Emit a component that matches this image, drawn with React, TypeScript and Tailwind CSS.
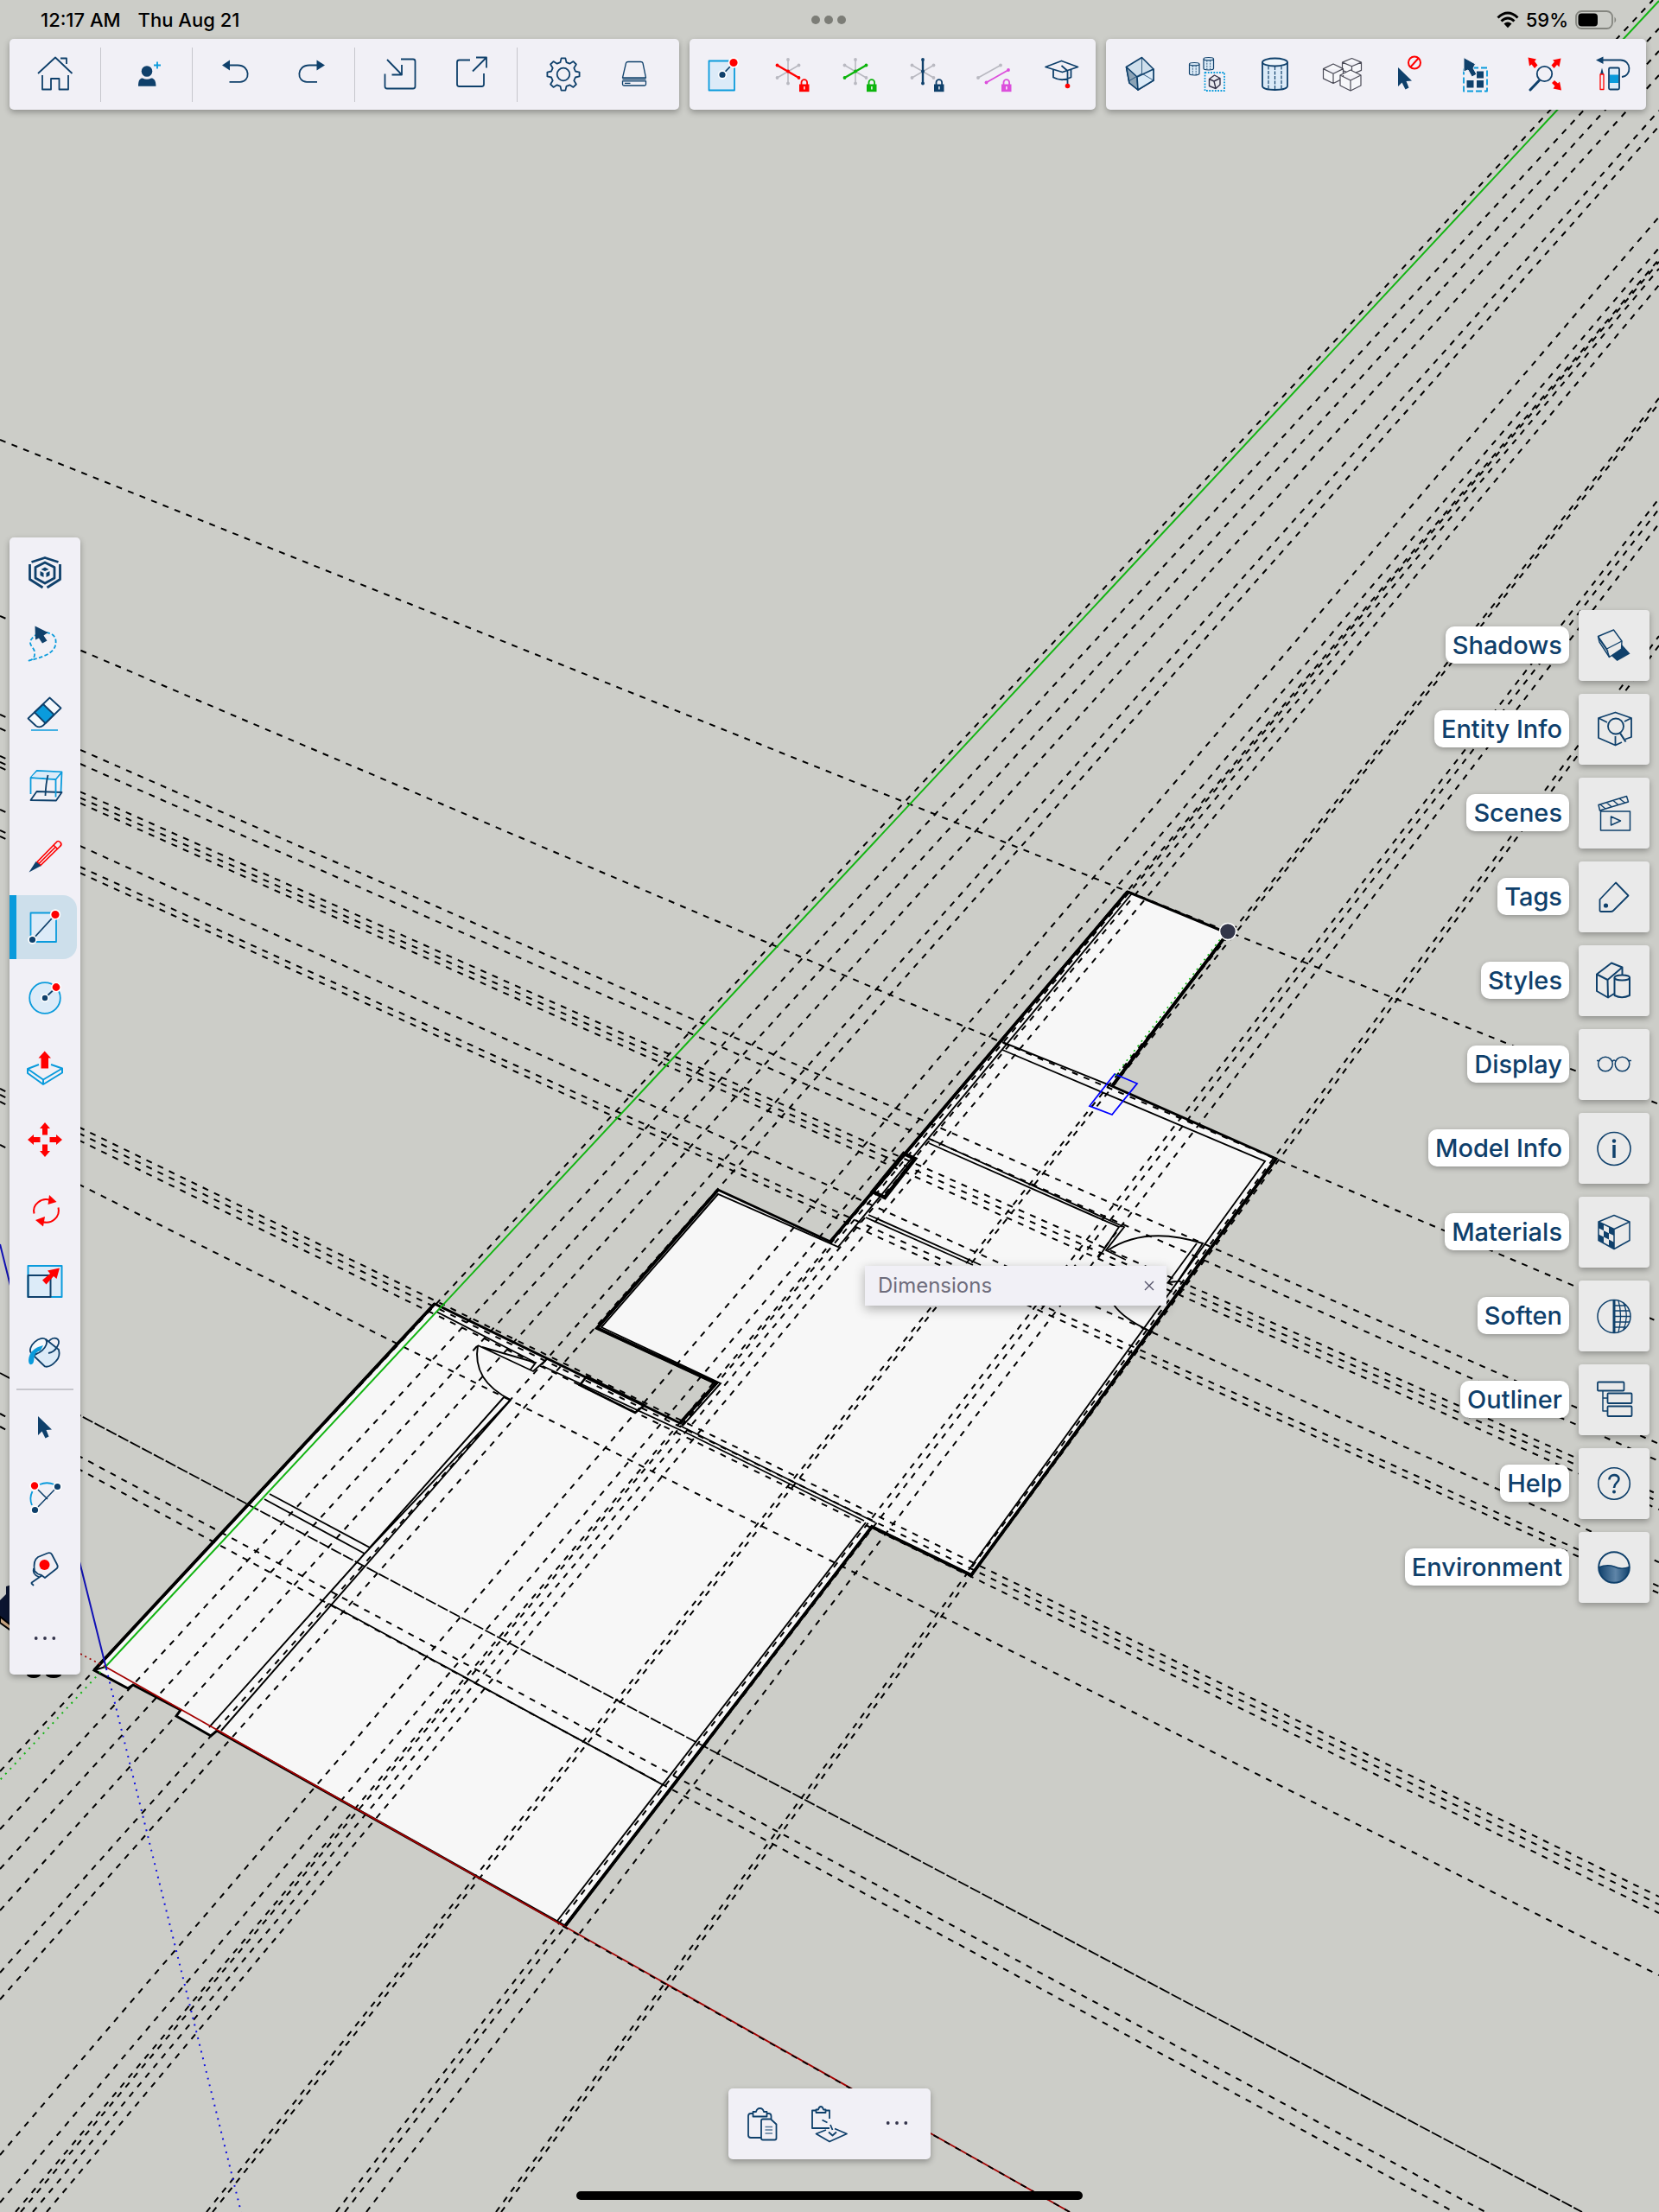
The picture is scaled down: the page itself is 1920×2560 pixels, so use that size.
import type { ReactNode } from "react";

const NAVY = "#0f406b";
const BLUE = "#0a9bdc";
const PALE = "#dcebf8";
const RED = "#ff0000";

/* ---------- Model view data ---------- */

type Seg = [number, number, number, number];

const GUIDES: Seg[] = [
  // green axis direction
  [0, 2050, 1913, 0],
  [0, 2117, 1920, 33],
  [0, 2163, 1920, 59],
  [0, 2211, 1920, 87],
  [0, 2283, 1920, 128],
  [0, 2314, 1920, 146],
  [0, 2494, 1920, 251],
  [0, 2549, 1920, 287],
  [18, 2560, 1920, 300],
  [24, 2560, 1920, 303],
  [38, 2560, 1920, 311],
  [54, 2560, 1920, 330],
  [239, 2560, 1920, 461],
  [246, 2560, 1920, 467],
  [389, 2560, 1920, 577],
  [399, 2560, 1920, 589],
  [424, 2560, 1920, 606],
  [574, 2560, 1920, 736],
  [580, 2560, 1920, 747],
  // red axis direction
  [0, 509, 1920, 1278],
  [0, 713, 1920, 1530],
  [0, 827, 1920, 1671],
  [0, 843, 1920, 1691],
  [0, 875, 1920, 1730],
  [0, 882, 1920, 1738],
  [0, 888, 1920, 1747],
  [0, 937, 1920, 1808],
  [0, 961, 1920, 1836],
  [0, 968, 1920, 1844],
  [0, 1260, 1920, 2195],
  [0, 1267, 1920, 2204],
  [0, 1275, 1920, 2214],
  [0, 1325, 1920, 2286],
  [0, 1636, 1719, 2560],
  [0, 1651, 1683, 2560],
];

const FLOOR =
  "M503 1509 L109 1933 L148 1954 L154 1950 L209 1979 L204 1986 L244 2009 L251 2003 L654 2229 L1009 1767 L1124 1823 L1477 1341 L1287 1257 L1421 1080 L1305 1032 L961 1437 L831 1377 L691 1537 L829 1601 L787 1647 Z";

const WALLS = [
  "M505 1518 L618 1576 M628 1581 L800 1661 L1000 1760",
  "M787 1650 L1013 1762",
  "M553 1557 L617 1587 L633 1573 M553 1557 Q546 1598 591 1620 M558 1559 L620 1577 L614 1585",
  "M584 1616 L428 1791 L312 1729 M591 1620 L422 1798",
  "M422 1798 L306 1735 M422 1798 L242 1999 M591 1620 L256 2003",
  "M381 1856 L766 2065",
  "M645 2223 L1002 1762",
  "M1310 1034 L970 1443 L831 1382 L696 1536 L834 1601 L790 1650",
  "M1160 1206 L1287 1257 M1160 1215 L1464 1344 L1121 1817",
  "M1078 1319 L1301 1420 L1280 1447 L1303 1458 M1075 1323 L1295 1420 L1271 1456",
  "M1005 1406 L1135 1464 M1002 1409 L1126 1464",
  "M1282 1447 Q1326 1418 1392 1439 L1363 1483 L1352 1484 L1385 1439 M1289 1510 Q1300 1526 1330 1540",
  "M109 1933 L122 1929",
];

function ModelView() {
  return (
    <svg viewBox="0 0 1920 2560" preserveAspectRatio="xMidYMid slice" className="absolute inset-0 h-full w-full" aria-hidden="true">
      <path d={FLOOR} fill="#f7f7f7" />
      <g stroke="#000" strokeWidth="2" strokeDasharray="7 7.5">
        {GUIDES.map(([x1, y1, x2, y2], i) => (
          <line key={i} x1={x1} y1={y1} x2={x2} y2={y2} />
        ))}
      </g>
      <path d="M0 1589 L1831 2560" stroke="#000" strokeWidth="1.8" strokeDasharray="13 2.5" />
      <g fill="none" stroke="#000" strokeWidth="1.9">
        {WALLS.map((d) => (
          <path key={d} d={d} />
        ))}
        <path d={FLOOR} strokeWidth="3" />
        <path d="M503 1509 L109 1933 M654 2229 L1009 1767 L1124 1823 L1477 1341 M1287 1257 L1421 1080 M1305 1032 L961 1437 M831 1377 L691 1537 L829 1601 L787 1647" strokeWidth="3.8" />
        <path d="M1046 1335 L1059 1341 L1024 1386 L1010 1379 Z" strokeWidth="4.5" />
        <path d="M679 1593 L746 1626 L735 1635 L671 1603 Z" strokeWidth="2.6" />
      </g>

      {/* Axes */}
      <path d="M122 1929 L1920 1" stroke="#13b413" strokeWidth="2" />
      <path d="M122 1929 L0 2060" stroke="#13b413" strokeWidth="2" strokeDasharray="2 6" />
      <path d="M122 1929 L1238 2560" stroke="#a30000" strokeWidth="1.8" />
      <path d="M651 2229 L1238 2560" stroke="#000" strokeWidth="1.8" strokeDasharray="7 7.5" />
      <path d="M93 1914 L122 1929" stroke="#a30000" strokeWidth="1.8" strokeDasharray="2 4" />
      <path d="M0 1440 L123 1931" stroke="#1111b5" strokeWidth="2" />
      <path d="M123 1931 L279 2560" stroke="#1111e0" strokeWidth="2" strokeDasharray="2 6" />

      {/* Rectangle being drawn */}
      <path d="M1290 1243 L1316 1254 L1287 1290 L1261 1280 Z" fill="none" stroke="#0000ff" strokeWidth="1.8" />
      <path d="M1416 1082 L1289 1247" stroke="#10c010" strokeWidth="1.6" strokeDasharray="2 5" />
      <circle cx="1421" cy="1078" r="9.5" fill="#33364a" stroke="#fff" strokeWidth="1.6" />

      {/* Scale figure, mostly behind the tool palette */}
      <path d="M0 1852 L7 1845 L7 1836 L20 1832 L20 1890 L0 1876 Z" fill="#0b1530" />
      <path d="M0 1871 L14 1882 L14 1888 L0 1878 Z" fill="#c9a684" stroke="#000" strokeWidth="2" />
      <ellipse cx="39" cy="1938" rx="8" ry="4" />
      <ellipse cx="62" cy="1938" rx="9" ry="4" />
    </svg>
  );
}

/* ---------- Icons ---------- */

function Icon({ children, w = 1.8 }: { children: ReactNode; w?: number }) {
  return (
    <svg viewBox="0 0 48 48" className="size-12 shrink-0" fill="none" stroke={NAVY} strokeWidth={w} strokeLinejoin="round" aria-hidden="true">
      {children}
    </svg>
  );
}

function RedDot({ x, y, r = 4.6 }: { x: number; y: number; r?: number }) {
  return <circle cx={x} cy={y} r={r + 0.8} fill={RED} stroke="#fff" strokeWidth="1.6" />;
}

function NavyDot({ x, y, r = 3.6 }: { x: number; y: number; r?: number }) {
  return <circle cx={x} cy={y} r={r + 0.8} fill={NAVY} stroke="#fff" strokeWidth="1.6" />;
}

function Lock({ color }: { color: string }) {
  return (
    <>
      <path d="M35.5 36 V33.500 a3.300 3.300 0 0 1 6.600 0 V36" stroke={color} strokeWidth="1.800" />
      <rect x="33" y="35.500" width="11.500" height="8.700" fill={color} stroke="none" />
      <rect x="38.200" y="38" width="1.400" height="3.500" fill="#fff" stroke="none" />
    </>
  );
}

const AXES = [
  { x1: 20, y1: 7, x2: 20, y2: 34.5 },
  { x1: 7.5, y1: 13.5, x2: 32.5, y2: 28 },
  { x1: 32.5, y1: 13.5, x2: 7.5, y2: 28 },
];

function AxisLock({ active, color }: { active: number; color: string }) {
  const order = [0, 1, 2].filter((n) => n !== active).concat(active);
  return (
    <Icon>
      {order.map((n) => {
        const a = AXES[n];
        const c = n === active ? color : "#b9b9c1";
        return (
          <g key={n} stroke={c} fill={c}>
            <line {...a} strokeWidth={n === active ? 2.4 : 1.6} />
            <circle cx={a.x1} cy={a.y1} r="1.9" stroke="none" />
            <circle cx={a.x2} cy={a.y2} r="1.9" stroke="none" />
          </g>
        );
      })}
      <circle cx="20" cy="20.500" r="2" fill={color} stroke="none" />
      <Lock color={color} />
    </Icon>
  );
}

function gearPath() {
  const pts: string[] = [];
  for (let i = 0; i < 8; i++) {
    const mid = (i * Math.PI) / 4;
    [
      [-0.25, 14.3],
      [-0.13, 18.8],
      [0.13, 18.8],
      [0.25, 14.3],
    ].forEach(([off, r]) => {
      const a = mid + off;
      pts.push(`${(24 + r * Math.sin(a)).toFixed(1)} ${(24 - r * Math.cos(a)).toFixed(1)}`);
    });
  }
  return `M${pts.join(" L")} Z`;
}

function Cube({ x, y, w, h }: { x: number; y: number; w: number; h: number }) {
  const q = h / 4;
  return (
    <path
      d={`M${x} ${y} l${w / 2} ${q} v${h / 2} l${-w / 2} ${q} l${-w / 2} ${-q} v${-h / 2} z m${-w / 2} ${q} l${w / 2} ${q} l${w / 2} ${-q} m${-w / 2} ${q} v${h / 2}`}
      fill="#f7f7fa"
      stroke="#4b4b57"
      strokeWidth="1.2"
    />
  );
}

function Cylinder({ x, y, w, h }: { x: number; y: number; w: number; h: number }) {
  const r = w / 2;
  const e = w / 7;
  return (
    <g strokeWidth="1.2" fill={PALE}>
      <path d={`M${x} ${y + e} v${h - 2 * e} a${r} ${e} 0 0 0 ${w} 0 v${-(h - 2 * e)}`} />
      <ellipse cx={x + r} cy={y + e} rx={r} ry={e} />
      <path d={`M${x + w / 3} ${y + 2 * e} v${h - 2.5 * e} M${x + (2 * w) / 3} ${y + 2 * e} v${h - 2.5 * e}`} strokeDasharray="2 1" strokeWidth="0.8" />
    </g>
  );
}

const CURSOR = "M0 0 V22 L4.500 17.500 L8.500 25.500 L12.500 23.500 L9.500 16 L16 15.500 Z";

const Dots = () => (
  <Icon>
    {[13.7, 24, 34.3].map((x) => (
      <circle key={x} cx={x} cy="23" r="1.9" fill="#33334a" stroke="none" />
    ))}
  </Icon>
);

type Item = { label: string; icon: ReactNode };

const HOME: Item = {
  label: "Home",
  icon: (
    <Icon>
      <path d="M4 23 L24 4.500 L43.500 23 M30 5.500 H37 V12 M9 25 V41.500 H19 V29 H28.500 V41.500 H39 V25" />
    </Icon>
  ),
};

const INVITE: Item = {
  label: "Add collaborator",
  icon: (
    <Icon>
      <circle cx="24" cy="20.500" r="6.300" fill={NAVY} stroke="none" />
      <path d="M14 37.800 C14 31 16 28.500 19 28.500 Q24 31 29 28.500 C32 28.500 34.500 31 34.500 37.800 Z" fill={NAVY} stroke="none" />
      <path d="M36 9.500 V17.500 M32 13.500 H40" stroke={BLUE} />
    </Icon>
  ),
};

const HISTORY: Item[] = [
  {
    label: "Undo",
    icon: (
      <Icon>
        <path d="M17 13.500 H27 C42 13.500 42 32.800 30 32.800 H17.500" />
        <path d="M9 13.500 L18 7.500 V19.500 Z" fill={NAVY} stroke="none" />
      </Icon>
    ),
  },
  {
    label: "Redo",
    icon: (
      <Icon>
        <path d="M31 13.500 H21 C6 13.500 6 32.800 18 32.800 H30" />
        <path d="M39 13.500 L29.500 7.500 V19.500 Z" fill={NAVY} stroke="none" />
      </Icon>
    ),
  },
];

const TRANSFER: Item[] = [
  {
    label: "Import",
    icon: (
      <Icon>
        <path d="M9 7 L26 24.500 M26 13 V24.500 H14.500 M25 6.500 H39 Q41.500 6.500 41.500 9 V38 Q41.500 40.500 39 40.500 H9 Q6.500 40.500 6.500 38 V23.500" />
      </Icon>
    ),
  },
  {
    label: "Export",
    icon: (
      <Icon>
        <path d="M25 20.500 L41 4.500 M29 4.500 H41 V16.500 M22 7.500 H9.500 Q7 7.500 7 10 V35.500 Q7 38 9.500 38 H35.500 Q38 38 38 35.500 V23" />
      </Icon>
    ),
  },
];

const SETTINGS: Item[] = [
  {
    label: "Settings",
    icon: (
      <Icon>
        <path d={gearPath()} />
        <circle cx="24" cy="24" r="7.300" />
      </Icon>
    ),
  },
  {
    label: "Storage",
    icon: (
      <Icon w={1.3}>
        <path d="M14.500 11 Q15 9.500 17 9.500 H31.500 Q33.500 9.500 34 11 L37.500 28 H10.500 Z M10.500 29.800 H37.500 M10.500 31.800 H37.500 V35.500 Q37.500 37 36 37 H12 Q10.500 37 10.500 35.500 Z M13 34.300 H19.500" />
      </Icon>
    ),
  },
];

const INFERENCE: Item[] = [
  {
    label: "Rectangle",
    icon: (
      <Icon>
        <rect x="6.500" y="8.500" width="29.500" height="34" fill={PALE} stroke={BLUE} />
        <path d="M22 24.500 L31 15" />
        <NavyDot x={22} y={24.5} />
        <RedDot x={35} y={10.5} />
      </Icon>
    ),
  },
  { label: "Lock red axis", icon: <AxisLock active={1} color={RED} /> },
  { label: "Lock green axis", icon: <AxisLock active={2} color="#0cb40c" /> },
  { label: "Lock blue axis", icon: <AxisLock active={0} color={NAVY} /> },
  {
    label: "Lock parallel",
    icon: (
      <Icon>
        <path d="M6 28 L32 13.500" stroke="#b9b9c1" strokeWidth="1.6" />
        <path d="M15.500 33.500 L41 19" stroke="#dc4fdc" />
        <g fill="#b9b9c1" stroke="none">
          <circle cx="6" cy="28" r="1.900" />
          <circle cx="32" cy="13.500" r="1.900" />
        </g>
        <g fill="#dc4fdc" stroke="none">
          <circle cx="15.500" cy="33.500" r="1.900" />
          <circle cx="41" cy="19" r="1.900" />
        </g>
        <Lock color="#dc4fdc" />
      </Icon>
    ),
  },
  {
    label: "Learn",
    icon: (
      <Icon>
        <path d="M5 15.500 L23.500 8.500 L42.500 15.500 L24.500 21.500 Z M14 19 V27.500 Q24 33 34.500 27.500 V18.500 M23.500 14 L30.500 20 V35" />
        <circle cx="30.500" cy="37.500" r="2.800" fill={RED} stroke="none" />
      </Icon>
    ),
  },
];

const DISPLAY: Item[] = [
  {
    label: "Back edges",
    icon: (
      <Icon w={1.6}>
        <path d="M26.500 4.500 L40 18 V31 L22 42 L12 34 L8.500 15.500 Z" fill="#cfdfec" />
        <path d="M8.500 15.500 L21 27 L22 42 L12 34 Z" fill="#8ba3b6" />
        <path d="M21 27 L40 18 V31 L22 42 Z" fill={PALE} />
        <path d="M26.500 4.500 V23 L11 32 M26.500 23 L40 31" strokeWidth="0.8" />
      </Icon>
    ),
  },
  {
    label: "Hide similar",
    icon: (
      <Icon>
        <Cylinder x={3.5} y={10.5} w={11.5} h={14.5} />
        <Cylinder x={20} y={4.5} w={11.5} h={14.5} />
        <rect x="21.500" y="22" width="22.500" height="21" stroke={BLUE} strokeDasharray="1.8 1.5" />
        <path d="M32.500 25 L39 28.500 V36 L34 40.500 L26.500 37.500 V29.500 Z M26.500 29.500 L32 32 L39 28.500 M32 32 L34 40" stroke="#33334a" fill="#e9eaf0" strokeWidth="1.4" />
      </Icon>
    ),
  },
  {
    label: "Hidden geometry",
    icon: (
      <Icon>
        <path d="M10 10 V37.500 C10 43.500 39 43.500 39 37.500 V10" fill={PALE} />
        <ellipse cx="24.500" cy="10" rx="14.500" ry="4.500" fill="#eef5fb" />
        <path d="M17 14.500 V41.500 M24.500 15 V42 M32 14.500 V41.500" strokeDasharray="4 1.5" strokeWidth="1.2" />
      </Icon>
    ),
  },
  {
    label: "Hide rest of model",
    icon: (
      <Icon>
        <Cube x={35.5} y={5.5} w={22} h={18.5} />
        <Cube x={14} y={12} w={23} h={22.5} />
        <Cube x={34} y={19} w={24} h={24} />
      </Icon>
    ),
  },
  {
    label: "Deselect",
    icon: (
      <Icon>
        <path d={CURSOR} transform="translate(11 16)" fill={NAVY} stroke="none" />
        <circle cx="30" cy="10.500" r="7" stroke={RED} strokeWidth="2" />
        <path d="M25.500 15.500 L34.500 5.500" stroke={RED} strokeWidth="2" />
      </Icon>
    ),
  },
  {
    label: "Select all",
    icon: (
      <Icon>
        <rect x="8" y="16.500" width="27" height="27" stroke={BLUE} strokeDasharray="7 3" />
        <path d="M23 20.500 h8 v8 h-8 z M11.500 31 h8 v8.500 h-8 z M23 31 h8 v8.500 h-8 z" fill={NAVY} stroke="none" />
        <path d="M8 4.500 V21 L13 19 L17.500 27 L23 24 L19 17 L21.500 12 Z" fill={NAVY} stroke="#f1f0f6" strokeWidth="1" />
      </Icon>
    ),
  },
  {
    label: "Zoom extents",
    icon: (
      <Icon>
        <circle cx="23.500" cy="23.500" r="8.700" />
        <path d="M17 31.500 L7 42" strokeWidth="3" strokeLinecap="round" />
        <path
          d="M4.500 4.500 L14 6.500 L12 9 L15.500 13.500 L12 17 L8.500 12.500 L6 14.500 Z M42.500 5.500 L40.500 15.500 L38 13 L34.500 17 L31.500 13.500 L35 9.500 L33 7.500 Z M43 42.500 L33.500 40.500 L35.500 37.500 L32 34 L35 31 L39 34.500 L41 32.500 Z"
          fill={RED}
          stroke="none"
        />
      </Icon>
    ),
  },
  {
    label: "Erase last",
    icon: (
      <Icon>
        <path d="M12 7.500 H33.500 C46 7.500 47 26 35 27" />
        <path d="M5 7.500 L13.500 3.500 V12 Z" fill={NAVY} stroke="none" />
        <path d="M12 16.500 L14 24 H10 Z" fill={NAVY} stroke="none" />
        <rect x="10" y="24" width="4" height="17.500" stroke={RED} strokeWidth="1.300" />
        <rect x="20" y="16.500" width="12" height="25" rx="1.500" fill={PALE} />
        <rect x="21" y="24.500" width="10" height="9.500" fill={BLUE} stroke="none" />
      </Icon>
    ),
  },
];

const TOOLS: Item[] = [
  {
    label: "Search",
    icon: (
      <Icon w={2.8}>
        <path d="M8.500 11.500 L24 6.500 L39.500 11.500 M6.500 14 V31.500 L21.500 41 M41.500 14 V31.500 L26.500 41" />
        <path d="M13 17.500 L24 12 L35 17.500 V30 L24 36 L13 30 Z" />
        <path d="M24 17.500 L28.500 20 L24 22 L19.500 20 Z M18.500 22 L22.500 24 V29 L18.500 27 Z M29.500 22 L25.500 24 V29 L29.500 27 Z" fill={NAVY} stroke="none" />
      </Icon>
    ),
  },
  {
    label: "Lasso",
    icon: (
      <Icon>
        <path d="M5.500 43.500 Q13 42 12 34 C12 28 3 25 9 18 C15 9 35 8 36.500 20 C38 34 24 39 5.500 43.500 Z" stroke={BLUE} strokeDasharray="4.500 2.500" />
        <path d="M12.500 3.500 L27.500 11 L22.500 14.500 L26.500 20.500 L21 23.500 L17 17.500 L13 19.500 Z" fill={NAVY} stroke="none" />
      </Icon>
    ),
  },
  {
    label: "Eraser",
    icon: (
      <Icon>
        <path d="M4.500 28.500 L29.500 4.500 L42.500 16.500 L22 36.500 Q18 40 13.500 37 Z" fill="#f4f8fc" />
        <path d="M12 21.500 L22 12 L34.500 24 L24.500 34 Z" fill={BLUE} />
        <path d="M8 42 H39" stroke={BLUE} strokeWidth="1.500" />
      </Icon>
    ),
  },
  {
    label: "Section plane",
    icon: (
      <Icon>
        <path d="M7.500 41 L14.500 31 L43.500 32 L37 41.500 Z" />
        <path d="M7.500 34 V15 L14.500 7 L43.500 8.500 L36.500 17 V37.500 M7.500 15 L36.500 17 M43.500 8.500 L42.500 31" stroke={BLUE} />
        <path d="M8.500 14 L15 8 L42 9 L36 16 Z" fill={PALE} stroke="none" />
        <path d="M27.500 12 Q25 22 24.500 36" />
      </Icon>
    ),
  },
  {
    label: "Pencil",
    icon: (
      <Icon>
        <path d="M15 30.500 L37 8 Q39 5 42 8 Q44 10.500 41.500 12.500 L19 34.500 Z M34 11 L38.500 15.500 M17 32.500 L36 13.500" stroke={RED} strokeWidth="1.700" />
        <path d="M5.500 42.500 L13.500 30 L19.500 35 Z" fill={NAVY} stroke="none" />
      </Icon>
    ),
  },
  {
    label: "Rectangle tool",
    icon: (
      <Icon>
        <rect x="7.500" y="7.500" width="29.500" height="33.500" fill={PALE} stroke={BLUE} />
        <path d="M9.500 38.500 L36 9.500" />
        <NavyDot x={9.5} y={38.5} />
        <RedDot x={36} y={9.5} />
      </Icon>
    ),
  },
  {
    label: "Circle tool",
    icon: (
      <Icon>
        <circle cx="24" cy="24" r="17.800" fill={PALE} stroke={BLUE} />
        <path d="M24 24 L33 15.500" />
        <NavyDot x={24} y={24} r={3.2} />
        <RedDot x={37} y={11.5} r={4.4} />
      </Icon>
    ),
  },
  {
    label: "Push/Pull",
    icon: (
      <Icon>
        <path d="M17 19 L4 24 V29 L22 42 L44 28.500 V23.500 L31 19 M4 24 L22 36.500 L44 23.500 M22 36.500 V42" stroke={BLUE} strokeWidth="2" />
        <path d="M23.700 3.500 L31 11.500 H28 V23.500 H19.500 V11.500 H16.500 Z" fill={RED} stroke="none" />
      </Icon>
    ),
  },
  {
    label: "Move",
    icon: (
      <Icon>
        {[0, 90, 180, 270].map((r) => (
          <path key={r} d="M24 4 L30 11 H27 V18.500 H21 V11 H18 Z" transform={`rotate(${r} 24 24)`} fill={RED} stroke="none" />
        ))}
      </Icon>
    ),
  },
  {
    label: "Rotate",
    icon: (
      <Icon>
        <path d="M11.500 27.500 C9 17 20 8.500 30 12 M39.500 20.500 C42 31 32 40.500 21 37" stroke={RED} strokeWidth="2" />
        <path d="M29 6 L37.500 14 L27.500 17 Z M22 42.500 L13 35 L24 31 Z" fill={RED} stroke="none" />
      </Icon>
    ),
  },
  {
    label: "Scale",
    icon: (
      <Icon>
        <rect x="4.500" y="6" width="39" height="36" fill={PALE} stroke={BLUE} strokeWidth="2" />
        <rect x="4.500" y="17" width="26" height="25" strokeWidth="2" />
        <path d="M41 8.500 L37.500 21 L34 18 L25.500 27.500 L21 22.500 L30 15 L27 11.500 Z" fill={RED} stroke="none" />
      </Icon>
    ),
  },
  {
    label: "Paint",
    icon: (
      <Icon>
        <path d="M25 9 L40 21 Q42 29 37 34 Q30 42 24 40.500 L11 28 Q20 24 25 9 Z" fill={PALE} />
        <ellipse cx="16.500" cy="17" rx="11.500" ry="6.500" transform="rotate(-42 16.500 17)" fill="#f4f8fc" />
        <path d="M28 12 C34 4 44 8 38.500 17 Q35 24 28 25" />
        <path d="M22 16 Q6 20 5 33 Q5 39 8.500 38 Q11.500 37 11.500 30 Q12 24 19 22 Z" fill={BLUE} stroke="none" />
      </Icon>
    ),
  },
];

const FAVORITES: Item[] = [
  {
    label: "Select",
    icon: (
      <Icon>
        <path d={CURSOR} transform="translate(16 12)" fill={NAVY} stroke="none" />
      </Icon>
    ),
  },
  {
    label: "Arc",
    icon: (
      <Icon>
        <path d="M18 9 Q26 5.500 35 9 M9.500 17 Q5.500 25 9 33" stroke={BLUE} />
        <path d="M16 15 L27 26 M15 36 L36 14" strokeWidth="1.500" />
        <RedDot x={12} y={10.5} r={4.2} />
        <NavyDot x={38.5} y={11.5} />
        <NavyDot x={12.5} y={38.5} />
      </Icon>
    ),
  },
  {
    label: "Tape measure",
    icon: (
      <Icon>
        <path d="M8 41 L21 32 M11 44 L8 41 M11 24 Q9 31 17 34 M12 27 Q15 31 20 32 L24 35 L38 24 Q39.500 22 38 19.500 L32 8 Q30.500 5.500 27 6.500 L16 11 Q10 15 12 27" />
        <circle cx="23.500" cy="20" r="6" fill={RED} stroke="none" />
      </Icon>
    ),
  },
  { label: "More tools", icon: <Dots /> },
];

const PANELS: Item[] = [
  {
    label: "Shadows",
    icon: (
      <Icon w={1.4}>
        <path d="M33 23 L42.500 33.500 L27.500 42 L21 36 Z" fill={NAVY} stroke="none" />
        <path d="M5.500 13.500 L23.500 6 L33 19 L32.500 28 L18.500 37.500 L7 20 Z" fill="#eaeaea" />
        <path d="M5.500 13.500 L15.500 28 L33 19 M15.500 28 L18.500 37.500 M6.500 16 L17 31" />
      </Icon>
    ),
  },
  {
    label: "Entity Info",
    icon: (
      <Icon>
        <path d="M37 35.500 L44 33 V11 L25.500 4.500 L6 11 V34 L25.500 42.500 L33 39 M6 11 L16 16 M44 11 L36 15 M25.500 32 V42.500" />
        <circle cx="26" cy="20.500" r="9" />
        <path d="M31 28.500 L37.500 38.500" strokeWidth="2.2" />
      </Icon>
    ),
  },
  {
    label: "Scenes",
    icon: (
      <Icon w={1.5}>
        <path d="M8.500 22 H42.500 V44 H8.500 Z M6 14.500 L38.500 4.500 L40.500 11 L7.500 21 Z M8 14 L14 19 M15.500 12 L21.500 17 M23 9.500 L29 14.500 M30.500 7.500 L36.500 12 M20.500 28 L31.500 33 L20.500 38 Z" />
      </Icon>
    ),
  },
  {
    label: "Tags",
    icon: (
      <Icon>
        <path d="M7.500 27 L26 7.500 L40.500 22.500 L23 40 Q22 41 20 41 H9 Q7.500 41 7.500 39.500 Z" />
        <circle cx="14.500" cy="34" r="2.600" fill={NAVY} stroke="none" />
      </Icon>
    ),
  },
  {
    label: "Styles",
    icon: (
      <Icon w={2}>
        <path d="M24 39 L17 43.500 L4 36 V16.500 L21 3.500 L33.500 8.500 V17 M4 16.500 L16.500 23 L33.500 8.500 M16.500 23 L17 43.500" />
        <path d="M24.500 20.500 V41 Q33 45.500 42 41 V20.500" fill="#eaeaea" />
        <ellipse cx="33.300" cy="20.500" rx="8.800" ry="3" fill="#eaeaea" />
      </Icon>
    ),
  },
  {
    label: "Display",
    icon: (
      <Icon w={1.5}>
        <circle cx="14" cy="23.500" r="8.300" />
        <circle cx="33.500" cy="23.500" r="8.300" />
        <path d="M22 20.500 Q24 17.500 26 20.500 M4 19.500 H7.500 M40.500 19.500 H44" />
      </Icon>
    ),
  },
  {
    label: "Model Info",
    icon: (
      <Icon w={1.6}>
        <circle cx="24" cy="24.500" r="19" />
        <path d="M24 20 V35" strokeWidth="3.500" />
        <circle cx="24" cy="15.500" r="2.200" fill={NAVY} stroke="none" />
      </Icon>
    ),
  },
  {
    label: "Materials",
    icon: (
      <Icon w={1.5}>
        <path d="M24 4.500 L42 12 V33.500 L24 43.500 L6 33.500 V12 Z M6 12 L24 20.500 L42 12 M24 20.500 V43.500" />
        <path
          d="M6 12 l6 2.900 v7.300 l-6 -2.900 z M18 17.700 l6 2.800 v7.600 l-6 -2.900 z M12 22.200 l6 3 v7.400 l-6 -3.200 z M6 26.400 l6 3 v7.400 l-6 -3.300 z M18 32.600 l6 3.200 v7.700 l-6 -3.400 z"
          fill={NAVY}
          stroke="none"
        />
      </Icon>
    ),
  },
  {
    label: "Soften",
    icon: (
      <Icon w={1.5}>
        <circle cx="24" cy="24.500" r="19" />
        <path d="M24 5.500 V43.500" strokeWidth="3" />
        <path d="M24 12 H38 M24 18 H42 M24 24.500 H43 M24 31 H42 M24 37 H38 M29 6 Q34 24 29 43 M34.500 8 Q42 24 34.500 41" strokeWidth="1.300" />
      </Icon>
    ),
  },
  {
    label: "Outliner",
    icon: (
      <Icon>
        <rect x="5" y="3.500" width="30.500" height="10" rx="1" />
        <rect x="16.500" y="16.500" width="28" height="11.500" rx="1" />
        <rect x="16.500" y="31.500" width="28" height="11.500" rx="1" />
        <path d="M11 13.500 V37 H16.500 M11 22 H16.500" strokeWidth="1.500" />
      </Icon>
    ),
  },
  {
    label: "Help",
    icon: (
      <Icon w={1.6}>
        <circle cx="24" cy="24" r="18.300" />
        <path d="M18.500 19.500 C18.500 12.500 29.500 12.500 29.500 18.500 C29.500 23 24 23 24 29" strokeWidth="2.600" />
        <circle cx="24" cy="33.500" r="2" fill={NAVY} stroke="none" />
      </Icon>
    ),
  },
  {
    label: "Environment",
    icon: (
      <Icon w={2}>
        <defs>
          <linearGradient id="env" x1="0" x2="1">
            <stop offset="0" stopColor={NAVY} />
            <stop offset="0.550" stopColor="#5f85a8" />
            <stop offset="1" stopColor={NAVY} />
          </linearGradient>
        </defs>
        <path d="M6 24 Q16 20 24 23 Q32 27 42 23.500 A18 18 0 0 1 6 24 Z" fill="url(#env)" stroke="none" />
        <path d="M6 24 Q16 20 24 23 Q32 27 42 23.500" strokeWidth="1.500" />
        <circle cx="24" cy="24" r="17.800" />
      </Icon>
    ),
  },
];

const CLIPBOARD: Item[] = [
  {
    label: "Paste",
    icon: (
      <Icon>
        <path d="M23 40 H11 Q8 40 8 37 V15 Q8 12 11 12 H13.500 M29 12 H31.500 Q34.500 12 34.500 15 V18.500" />
        <path d="M13.500 15.500 V10 H17 Q18 6 21.500 6 Q25 6 26 10 H29.500 V15.500 Z" />
        <path d="M25 18.500 H34 L40.500 24.500 V40.500 Q40.500 42.500 38.500 42.500 H25 Q23 42.500 23 40.500 V20.500 Q23 18.500 25 18.500 Z" />
        <path d="M27.500 27.500 H36 M27.500 31 H36 M27.500 35 H36" strokeWidth="1.300" stroke="#5a7b9b" />
      </Icon>
    ),
  },
  {
    label: "Paste in place",
    icon: (
      <Icon>
        <path d="M24 18 V8.500 H20 M8 8.500 H4 V29 H24" />
        <path d="M8.500 11 V7.500 H11 Q12 4 14 4 Q16 4 17 7.500 H19.500 V11 Z" />
        <path d="M20 31 L8.500 35.500 L24 44.500 L44 35.500 L30 29.500" />
        <path d="M15.500 19.500 L21.500 22.500 M25 25 L27.500 31 M23 33.500 L27.500 37.500 L32 33.500" />
      </Icon>
    ),
  },
  { label: "More actions", icon: <Dots /> },
];

/* ---------- Layout ---------- */

const BAR = "rounded-[5px] bg-[#f1f0f6] shadow-[0_3px_7px_rgba(0,0,0,0.3)]";

function ToolButton({ item, active = false }: { item: Item; active?: boolean }) {
  return (
    <button
      type="button"
      aria-label={item.label}
      className={
        active
          ? "my-1 mr-1 flex h-[74px] flex-1 items-center rounded-r-2xl border-l-8 border-[#0a9bdc] bg-[#cddfeb] pl-[9px]"
          : "flex h-[82px] min-w-0 flex-1 items-center justify-center"
      }
    >
      {item.icon}
    </button>
  );
}

function StatusBar() {
  return (
    <header className="grid h-[45px] grid-cols-3 items-center pl-[47px] pr-[48px] text-[22px] font-medium leading-7 text-black">
      <div className="flex gap-5">
        <span>12:17 AM</span>
        <span>Thu Aug 21</span>
      </div>
      <div className="flex justify-center gap-[5px]">
        <span className="size-[10px] rounded-full bg-[#7c7d77]" />
        <span className="size-[10px] rounded-full bg-[#7c7d77]" />
        <span className="size-[10px] rounded-full bg-[#7c7d77]" />
      </div>
      <div className="flex items-center justify-end gap-2">
        <svg viewBox="0 0 26 20" className="h-5 w-[26px]" aria-hidden="true">
          <path d="M1.500 7.500 Q13 -3.500 24.500 7.500 M5.500 11.500 Q13 4.500 20.500 11.500" fill="none" stroke="#000" strokeWidth="3" />
          <path d="M8.500 14.500 Q13 10.500 17.500 14.500 L13 19.300 Z" />
        </svg>
        <span>59%</span>
        <svg viewBox="0 0 49 22" className="h-[22px] w-[49px]" aria-hidden="true">
          <rect x="1" y="1" width="42" height="20" rx="6.500" fill="none" stroke="#84857f" strokeWidth="1.800" />
          <rect x="3.500" y="3.500" width="22.500" height="15" rx="4" />
          <path d="M45.500 7.500 Q49 11 45.500 14.500 Z" fill="#84857f" />
        </svg>
      </div>
    </header>
  );
}

function Divider() {
  return <span className="h-[63px] w-px shrink-0 bg-[#c6c6cc]" />;
}

function Section({ items, className = "" }: { items: Item[]; className?: string }) {
  return (
    <div className="flex items-center">
      <Divider />
      <div className={`flex flex-1 ${className}`}>
        {items.map((item) => (
          <ToolButton key={item.label} item={item} />
        ))}
      </div>
    </div>
  );
}

function SideButton({ item, active = false }: { item: Item; active?: boolean }) {
  return (
    <div className="flex">
      <ToolButton item={item} active={active} />
    </div>
  );
}

export default function App() {
  return (
    <div className="relative flex min-h-screen flex-col overflow-hidden bg-[#cccdc8] font-['Inter',sans-serif]">
      <ModelView />

      <div className="relative">
        <StatusBar />
        <nav className="grid grid-cols-[775fr_469fr_625fr] gap-3 pl-[11px] pr-[15px]" aria-label="Toolbars">
          <div className={`grid h-[82px] grid-cols-[105fr_106fr_188fr_188fr_188fr] ${BAR}`}>
            <div className="flex">
              <ToolButton item={HOME} />
            </div>
            <Section items={[INVITE]} />
            <Section items={HISTORY} className="px-1" />
            <Section items={TRANSFER} className="px-[11px]" />
            <Section items={SETTINGS} className="px-[11px]" />
          </div>
          <div className={`flex ${BAR}`}>
            {INFERENCE.map((item) => (
              <ToolButton key={item.label} item={item} />
            ))}
          </div>
          <div className={`flex ${BAR}`}>
            {DISPLAY.map((item) => (
              <ToolButton key={item.label} item={item} />
            ))}
          </div>
        </nav>
      </div>

      <main className="relative flex flex-1 items-center justify-between px-[11px] pt-4">
        <div className={`flex w-[82px] flex-col ${BAR}`} role="toolbar" aria-label="Tools">
          {TOOLS.map((item) => (
            <SideButton key={item.label} item={item} active={item.label === "Rectangle tool"} />
          ))}
          <hr className="mx-2 my-px border-t-2 border-[#c6c6cc]" />
          {FAVORITES.map((item) => (
            <SideButton key={item.label} item={item} />
          ))}
        </div>

        <ul className="flex flex-col gap-[15px]">
          {PANELS.map((item) => (
            <li key={item.label}>
              <button type="button" className="flex w-full items-center justify-end gap-[11px]">
                <span className="rounded-[10px] bg-white px-2 text-[29px] font-medium leading-[43px] text-[#0f406b] shadow-[0_2px_6px_rgba(0,0,0,0.3)]">{item.label}</span>
                <span className="flex size-[82px] items-center justify-center rounded-[4px] bg-[#eaeaea] shadow-[0_3px_7px_rgba(0,0,0,0.3)]">{item.icon}</span>
              </button>
            </li>
          ))}
        </ul>
      </main>

      {/* Floating measurement box */}
      <div className="absolute left-[1001px] top-[1465px] flex h-[46px] w-[349px] items-center justify-between bg-[#f1f0f6] pl-[15px] pr-[14px] shadow-[0_4px_12px_rgba(0,0,0,0.3)]">
        <span className="text-[24px] leading-7 text-[#6e6c7b]">Dimensions</span>
        <button type="button" aria-label="Close">
          <svg viewBox="0 0 12 12" className="size-3" stroke="#55536a" strokeWidth="1.400" aria-hidden="true">
            <path d="M1 1 L11 11 M11 1 L1 11" />
          </svg>
        </button>
      </div>

      <footer className="relative flex flex-col items-center pb-[14px]">
        <div className={`flex h-[82px] w-[234px] ${BAR}`}>
          {CLIPBOARD.map((item) => (
            <ToolButton key={item.label} item={item} />
          ))}
        </div>
        <div className="mt-[37px] h-[10px] w-[586px] rounded-full bg-black" />
      </footer>
    </div>
  );
}
